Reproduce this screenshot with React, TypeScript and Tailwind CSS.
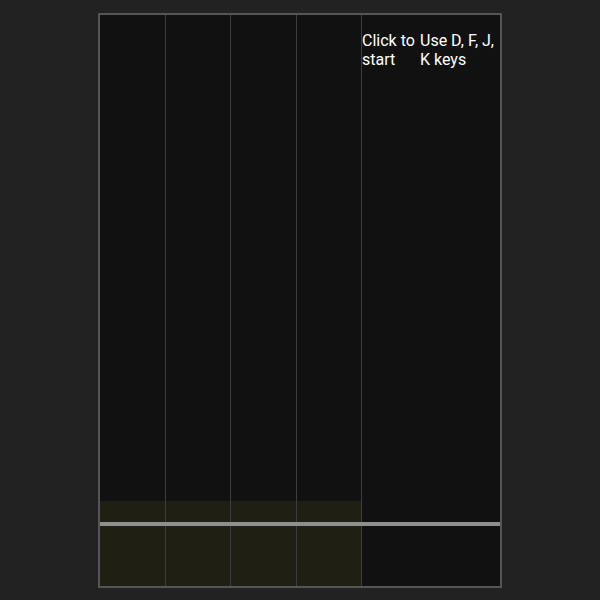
export default function App() {
  const lanes = [0, 1, 2, 3];
  return (
    <div className="min-h-screen w-full bg-[#222222] flex justify-center pt-[13px]" style={{ fontFamily: 'Roboto, "Liberation Sans", sans-serif' }}>
      <div className="relative flex w-[404px] h-[575px] border-2 border-[#555555] bg-[#111111]">
        {lanes.map((i) => (
          <div key={i} className="relative w-[65.5px] h-full border-r border-[#3d3d3d]">
            <div className="absolute left-0 right-0 bottom-0 h-[85px] bg-[#201f14]" />
          </div>
        ))}
        <div className="w-[58px] pt-[16px] text-white text-[16px] leading-[19px]">Click to start</div>
        <div className="flex-1 pt-[16px] text-white text-[16px] leading-[19px]">Use D, F, J, K keys</div>
        <div className="absolute left-0 right-0 top-[507px] h-[4px] bg-[#8f8f8f]" />
      </div>
    </div>
  );
}
